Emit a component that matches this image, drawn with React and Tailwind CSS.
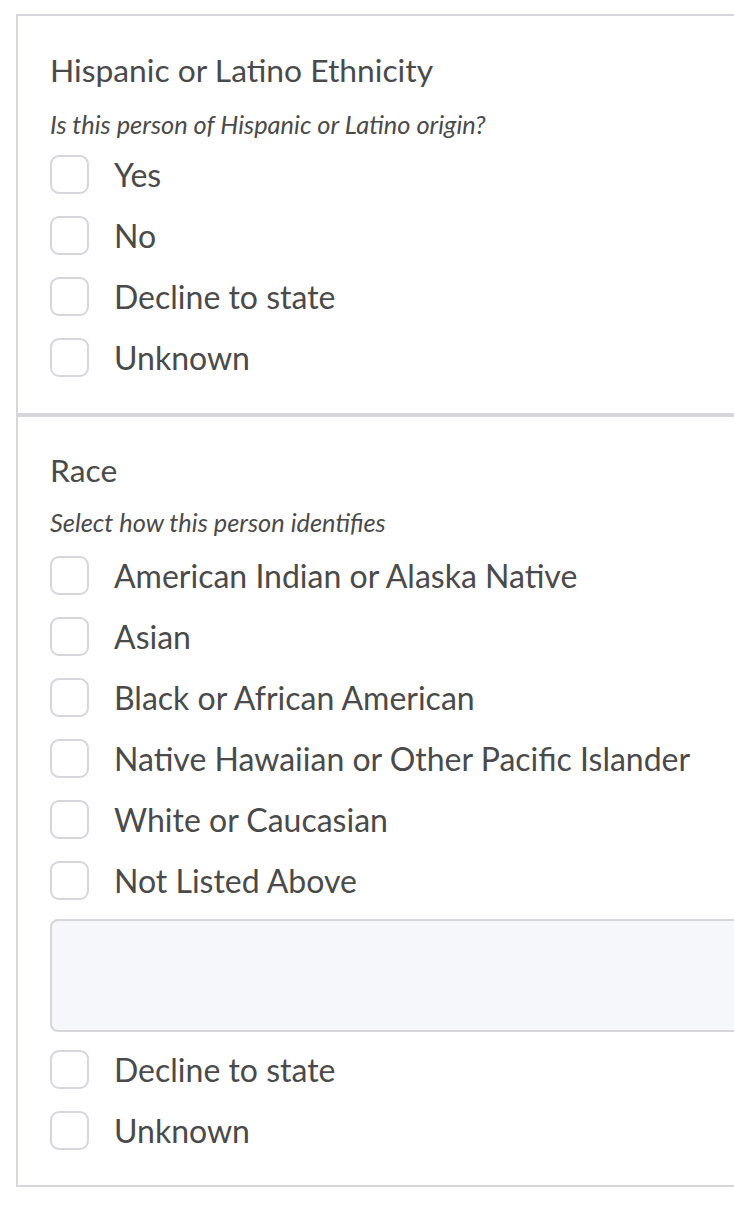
import React from 'react';

const Checkbox = ({ label }) => (
  <label className="flex h-[61px] items-center">
    <span className="h-[39px] w-[39px] shrink-0 rounded-[9px] border-2 border-[#d6d6db] bg-white" />
    <span className="ml-[25px] text-[32px] leading-[38px] text-[#4a4a4a]">{label}</span>
  </label>
);

const ethnicity = ['Yes', 'No', 'Decline to state', 'Unknown'];
const races = [
  'American Indian or Alaska Native',
  'Asian',
  'Black or African American',
  'Native Hawaiian or Other Pacific Islander',
  'White or Caucasian',
  'Not Listed Above',
];

export default function App() {
  return (
    <div className="w-[734px] min-h-[1210px] overflow-hidden bg-white font-['Lato',sans-serif]">
      <div className="mt-[14px] ml-[16px] w-[780px] border-2 border-[#d6d6db]">
        {/* Ethnicity */}
        <div className="pl-[32px] pt-[37px] pb-[25px] border-b-[4px] border-[#d6d6db]">
          <h3 className="text-[31.8px] leading-[34px] text-[#4a4a4a]">Hispanic or Latino Ethnicity</h3>
          <p className="mt-[23px] text-[25.4px] leading-[28px] italic text-[#4a4a4a]">Is this person of Hispanic or Latino origin?</p>
          <div className="mt-[6px]">
            {ethnicity.map((e) => (
              <Checkbox key={e} label={e} />
            ))}
          </div>
        </div>

        {/* Race */}
        <div className="pl-[32px] pt-[36px] pb-[24px]">
          <h3 className="text-[31.8px] leading-[34px] text-[#4a4a4a]">Race</h3>
          <p className="mt-[21px] text-[25.4px] leading-[28px] italic text-[#4a4a4a]">Select how this person identifies</p>
          <div className="mt-[9px]">
            {races.map((r) => (
              <Checkbox key={r} label={r} />
            ))}
          </div>
          <textarea className="mt-[8px] block h-[113px] w-[720px] resize-none rounded-[8px] border-2 border-[#d6d6db] bg-[#f5f7fb]" />
          <div className="mt-[7px]">
            <Checkbox label="Decline to state" />
            <Checkbox label="Unknown" />
          </div>
        </div>
      </div>
    </div>
  );
}
